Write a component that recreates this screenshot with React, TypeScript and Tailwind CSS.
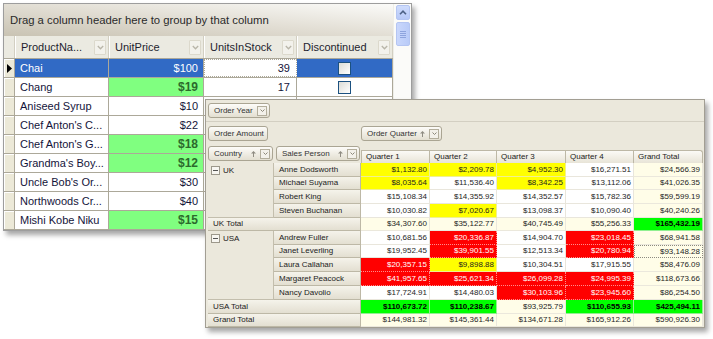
import { Fragment } from "react";

const products = [
  { name: "Chai", price: "$100", stock: "39", sel: true, check: true },
  { name: "Chang", price: "$19", stock: "17", green: true, check: true },
  { name: "Aniseed Syrup", price: "$10" },
  { name: "Chef Anton's C...", price: "$22" },
  { name: "Chef Anton's G...", price: "$18", green: true },
  { name: "Grandma's Boy...", price: "$12", green: true },
  { name: "Uncle Bob's Or...", price: "$30" },
  { name: "Northwoods Cr...", price: "$40" },
  { name: "Mishi Kobe Niku", price: "$15", green: true },
];

type Cell = [string, string];

const pivotRows: { label: string; total?: boolean; cells: Cell[] }[] = [
  { label: "Anne Dodsworth", cells: [["$1,132.80", "y"], ["$2,209.78", "y"], ["$4,952.30", "y"], ["$16,271.51", "w"], ["$24,566.39", "l"]] },
  { label: "Michael Suyama", cells: [["$8,035.64", "y"], ["$11,536.40", "w"], ["$8,342.25", "y"], ["$13,112.06", "w"], ["$41,026.35", "l"]] },
  { label: "Robert King", cells: [["$15,108.34", "w"], ["$14,355.92", "w"], ["$14,352.57", "w"], ["$15,782.36", "w"], ["$59,599.19", "l"]] },
  { label: "Steven Buchanan", cells: [["$10,030.82", "w"], ["$7,020.67", "y"], ["$13,098.37", "w"], ["$10,090.40", "w"], ["$40,240.26", "l"]] },
  { label: "UK Total", total: true, cells: [["$34,307.60", "l"], ["$35,122.77", "l"], ["$40,745.49", "l"], ["$55,256.33", "l"], ["$165,432.19", "g"]] },
  { label: "Andrew Fuller", cells: [["$10,681.56", "w"], ["$20,336.87", "r"], ["$14,904.70", "w"], ["$23,018.45", "r"], ["$68,941.58", "l"]] },
  { label: "Janet Leverling", cells: [["$19,952.45", "w"], ["$39,901.55", "r"], ["$12,513.34", "w"], ["$20,780.94", "r"], ["$93,148.28", "f"]] },
  { label: "Laura Callahan", cells: [["$20,357.15", "r"], ["$9,898.88", "y"], ["$10,304.51", "w"], ["$17,915.55", "w"], ["$58,476.09", "l"]] },
  { label: "Margaret Peacock", cells: [["$41,957.65", "r"], ["$25,621.34", "r"], ["$26,099.28", "r"], ["$24,995.39", "r"], ["$118,673.66", "l"]] },
  { label: "Nancy Davolio", cells: [["$17,724.91", "w"], ["$14,480.03", "w"], ["$30,103.96", "r"], ["$23,945.60", "r"], ["$86,254.50", "l"]] },
  { label: "USA Total", total: true, cells: [["$110,673.72", "g"], ["$110,238.67", "g"], ["$93,925.79", "l"], ["$110,655.93", "g"], ["$425,494.11", "g"]] },
  { label: "Grand Total", total: true, cells: [["$144,981.32", "l"], ["$145,361.44", "l"], ["$134,671.28", "l"], ["$165,912.26", "l"], ["$590,926.30", "l"]] },
];

const cellCls: Record<string, string> = {
  w: "bg-white text-[#1e1e1e] border-[#e9e6dc]",
  l: "bg-[#fffde8] text-[#1e1e1e] border-[#ebe8dc]",
  f: "bg-[#fffde8] text-[#1e1e1e] border border-dotted border-[#8c8a80]",
  y: "bg-[#ffff00] text-[#1e1e1e] border-[#f0f090]",
  r: "bg-[#ff0000] text-white border-dotted border-[#ff8c8c]",
  g: "bg-[#00ff00] text-black font-bold border-[#90f090]",
};

function Chevron({ color }: { color: string }) {
  return (
    <svg width="7" height="5" viewBox="0 0 7 5">
      <polyline points="0.8,1 3.5,3.8 6.2,1" fill="none" stroke={color} strokeWidth="1.3" />
    </svg>
  );
}

function HeaderCell({ label, w }: { label: string; w: string }) {
  return (
    <div className={`${w} flex items-center justify-between pl-[6px] pr-[2px] border-r border-[#d2cfc2] shadow-[inset_1px_0_0_#fff]`}>
      <span className="whitespace-nowrap">{label}</span>
      <div className="w-[12px] h-[15px] flex items-center justify-center border border-[#dcd9cc] bg-[#f3f2ec] rounded-[1px]">
        <Chevron color="#b8b5a8" />
      </div>
    </div>
  );
}

function CheckBox() {
  return <div className="w-[13px] h-[13px] border border-[#1c5180] bg-linear-to-br from-[#dcdcd6] to-white" />;
}

function GridWindow() {
  return (
    <div className="absolute left-[3px] top-[3px] w-[409px] h-[228px] border border-[#9d9d9d] bg-white flex shadow-[3px_4px_5px_rgba(0,0,0,0.35)] text-[11px] text-[#14143a]">
      <div className="w-[389px] flex flex-col">
        <div className="h-[32px] flex items-center pl-[6px] pt-[1px] text-[11.3px] text-[#2a2a2a] bg-linear-to-tr from-[#c9c3b3] via-[#e2ded4] to-[#fbfbf9]">
          Drag a column header here to group by that column
        </div>
        <div className="h-[23px] flex bg-[#ebeae1] border-b border-[#aca899] text-[#1e1e2e]">
          <div className="w-[11px] border-r border-[#d2cfc2]" />
          <HeaderCell label="ProductNa..." w="w-[94px]" />
          <HeaderCell label="UnitPrice" w="w-[95px]" />
          <HeaderCell label="UnitsInStock" w="w-[93px]" />
          <HeaderCell label="Discontinued" w="w-[96px]" />
        </div>
        {products.map((p) => (
          <div key={p.name} className="h-[19px] flex border-b border-[#aca899]">
            <div className="w-[11px] flex items-center justify-center bg-[#ece9d8] border-r border-[#aca899] shadow-[inset_1px_1px_0_#fff]">
              {p.sel && (
                <svg width="5" height="9" viewBox="0 0 5 9">
                  <polygon points="0,0 5,4.5 0,9" fill="#000" />
                </svg>
              )}
            </div>
            <div className={`w-[94px] flex items-center pl-[5px] border-r border-[#aca899] whitespace-nowrap ${p.sel ? "bg-[#316ac5] text-white" : ""}`}>
              {p.name}
            </div>
            <div className={`w-[95px] flex items-center justify-end pr-[5px] border-r border-[#aca899] ${p.sel ? "bg-[#316ac5] text-white" : p.green ? "bg-[#80ff80] font-bold text-[#2c6a2c] text-[12px]" : ""}`}>
              {p.price}
            </div>
            <div className={`w-[93px] flex items-center justify-end pr-[6px] border-r border-[#aca899] ${p.sel ? "border border-dotted border-[#222]" : ""}`}>
              {p.stock}
            </div>
            <div className={`w-[96px] flex items-center justify-center border-r border-[#aca899] ${p.sel ? "bg-[#316ac5]" : ""}`}>
              {p.check && <CheckBox />}
            </div>
          </div>
        ))}
      </div>
      <div className="w-[18px] bg-[#fbfbf9] flex flex-col items-center pt-[1px] gap-[2px] border-l border-[#eeeee8]">
        <div className="w-[14px] h-[15px] rounded-[2px] border border-[#b4c5f2] bg-linear-to-b from-[#cfdcfd] to-[#b7c9f7] flex items-center justify-center">
          <svg width="8" height="5" viewBox="0 0 8 5">
            <polyline points="1,4.2 4,1.2 7,4.2" fill="none" stroke="#4d6185" strokeWidth="1.6" />
          </svg>
        </div>
        <div className="w-[14px] h-[24px] rounded-[2px] border border-[#b4c5f2] bg-linear-to-r from-[#c9d7fc] to-[#b9cbf8] flex flex-col items-center justify-center gap-[1px]">
          <div className="w-[6px] h-[1px] bg-[#8ea4dd]" />
          <div className="w-[6px] h-[1px] bg-[#8ea4dd]" />
          <div className="w-[6px] h-[1px] bg-[#8ea4dd]" />
          <div className="w-[6px] h-[1px] bg-[#8ea4dd]" />
        </div>
      </div>
    </div>
  );
}

function DropBox() {
  return (
    <div className="w-[10px] h-[10px] border border-[#b3ae9c] bg-[#f3f1ea] flex items-center justify-center">
      <svg width="5" height="3" viewBox="0 0 5 3">
        <polyline points="0.5,0.5 2.5,2.5 4.5,0.5" fill="none" stroke="#8c887a" strokeWidth="1" />
      </svg>
    </div>
  );
}

function UpArrow() {
  return (
    <svg width="5" height="6" viewBox="0 0 5 6" className="mr-[4px]">
      <path d="M2.5 0 L5 2.6 H3 V6 H2 V2.6 H0 Z" fill="#8f8c82" />
    </svg>
  );
}

function FieldBtn({ label, w, sort, drop }: { label: string; w: string; sort?: boolean; drop?: boolean }) {
  return (
    <div className={`${w} h-[15px] flex items-center rounded-[3px] border border-[#aaa593] bg-linear-to-b from-[#fdfcf9] to-[#e3dfd1] pl-[5px] pr-[2px] text-[8px] text-[#333]`}>
      <span className="flex-1 whitespace-nowrap">{label}</span>
      {sort && <UpArrow />}
      {drop && <DropBox />}
    </div>
  );
}

const rowHead = "flex items-center pl-[5px] bg-linear-to-b from-[#f5f3eb] to-[#e3dfd1] border-b border-r border-[#bdb8a6] whitespace-nowrap";

function CountryCell({ label, span }: { label: string; span: string }) {
  return (
    <div className={`${span} flex items-start gap-[3px] pt-[3px] pl-[3px] border-r border-b border-[#c3bead] bg-[#ebe8dc]`}>
      <div className="w-[9px] h-[9px] border border-[#9c988b] bg-[#f7f6f1] flex items-center justify-center">
        <div className="w-[5px] h-[1px] bg-[#555]" />
      </div>
      <span className="leading-[9px]">{label}</span>
    </div>
  );
}

function PivotWindow() {
  const quarters = [
    { label: "Quarter 1", w: "w-[69px] border-l" },
    { label: "Quarter 2", w: "w-[67px]" },
    { label: "Quarter 3", w: "w-[69px]" },
    { label: "Quarter 4", w: "w-[68px]" },
    { label: "Grand Total", w: "w-[69px] rounded-tr-[3px]" },
  ];
  return (
    <div className="absolute left-[205px] top-[99px] w-[500px] h-[229px] border border-[#a29e93] bg-[#ebe8dc] shadow-[3px_4px_5px_rgba(0,0,0,0.35)] text-[8px] leading-[10px] text-[#222]">
      <div className="h-[22px] flex items-start pt-[3px] pl-[2px] border-b border-[#d3cfc2]">
        <FieldBtn label="Order Year" w="w-[62px]" drop />
      </div>
      <div className="h-[23px] flex items-start pt-[4px] pl-[2px]">
        <div className="w-[153px]">
          <FieldBtn label="Order Amount" w="w-[60px]" />
        </div>
        <FieldBtn label="Order Quarter" w="w-[81px]" sort drop />
      </div>
      <div className="h-[18px] flex pl-[2px]">
        <div className="w-[153px] flex gap-[3px] pt-[1px]">
          <FieldBtn label="Country" w="w-[65px]" sort drop />
          <FieldBtn label="Sales Person" w="w-[84px]" sort drop />
        </div>
        <div className="flex items-end">
          {quarters.map((q) => (
            <div key={q.label} className={`${q.w} h-[13px] flex items-center pl-[4px] bg-linear-to-b from-[#fbfaf6] to-[#e8e4d7] border-t border-r border-[#bdb8a6]`}>
              {q.label}
            </div>
          ))}
        </div>
      </div>
      <div className="pl-[2px] grid grid-cols-[66px_87px_69px_67px_69px_68px_69px] grid-rows-[14px_13px_14px_14px_13px_14px_13px_14px_14px_14px_14px_13px]">
        {pivotRows.map((r, i) => (
          <Fragment key={r.label}>
            {i === 0 && <CountryCell label="UK" span="row-span-4" />}
            {i === 5 && <CountryCell label="USA" span="row-span-5" />}
            <div className={`${rowHead} ${r.total ? "col-span-2 pl-[3px]" : ""}`}>{r.label}</div>
            {r.cells.map(([v, t], j) => (
              <div key={j} className={`flex items-center justify-end pr-[2px] border-r border-b ${cellCls[t]}`}>
                {v}
              </div>
            ))}
          </Fragment>
        ))}
      </div>
    </div>
  );
}

export default function App() {
  return (
    <div className="relative w-[713px] h-[339px] overflow-hidden bg-white font-['Liberation_Sans',Arial,sans-serif]">
      <GridWindow />
      <PivotWindow />
    </div>
  );
}
